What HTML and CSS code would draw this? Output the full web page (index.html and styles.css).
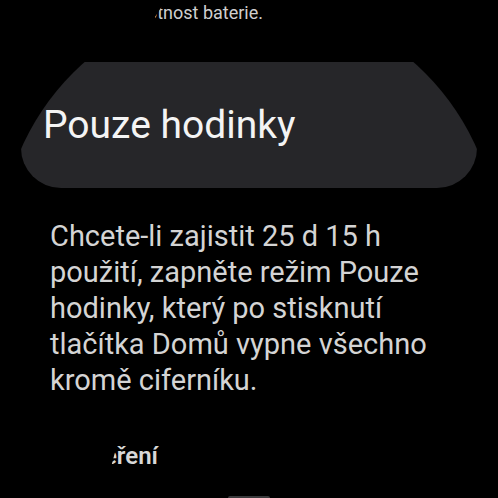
FILE: index.html
```html
<!DOCTYPE html>
<html lang="cs">
<head>
<meta charset="utf-8">
<link rel="stylesheet" href="styles.css">
</head>
<body>
<div class="screen">
  <p class="prev-line">životnost baterie.</p>
  <div class="card"><h1 class="card-title">Pouze hodinky</h1></div>
  <p class="desc">Chcete-li zajistit 25 d 15 h použití, zapněte režim Pouze hodinky, který po stisknutí tlačítka Domů vypne všechno kromě ciferníku.</p>
  <h2 class="next-title">Měření</h2>
  <div class="next-button"></div>
</div>
</body>
</html>
```
FILE: styles.css
```css
html, body {
  margin: 0;
  padding: 0;
  background: #000;
}
.screen {
  width: 498px;
  height: 498px;
  overflow: hidden;
  position: relative;
  display: flex;
  flex-direction: column;
  align-items: center;
  font-family: "Roboto", "Open Sans", sans-serif;
}
.prev-line {
  margin: 0;
  height: 30px;
  width: 498px;
  font-size: 18px;
  line-height: 26px;
  color: #cfcfcf;
  box-sizing: border-box;
  padding-right: 235px;
  text-align: right;
  white-space: nowrap;
  clip-path: polygon(166px 0, 498px 0, 498px 30px, 155px 30px, 155px 17px);
}
.card {
  margin-top: 32px;
  width: 456px;
  height: 126px;
  background: #262629;
  border-radius: 0 0 40px 40px;
  clip-path: circle(249px at 228px 187px);
  display: flex;
  align-items: center;
  box-sizing: border-box;
  padding-left: 22px;
}
.card-title {
  margin: 0;
  font-weight: 400;
  font-size: 39px;
  color: #f4f4f4;
  line-height: 44px;
}
.desc {
  margin: 30px 0 0 0;
  width: 498px;
  box-sizing: border-box;
  padding: 0 30px 0 50px;
  font-size: 29px;
  line-height: 36px;
  color: #d4d4d4;
}
.next-title {
  margin: 43px 0 0 0;
  width: 498px;
  box-sizing: border-box;
  padding-right: 340px;
  text-align: right;
  font-size: 24px;
  font-weight: 600;
  color: #d8d8d8;
  line-height: 30px;
  clip-path: polygon(118px 0, 498px 0, 498px 30px, 110px 30px);
}
.next-button {
  position: absolute;
  left: 228px;
  top: 496px;
  width: 42px;
  height: 4px;
  background: #3a3a3c;
  border-radius: 2px;
}
```
